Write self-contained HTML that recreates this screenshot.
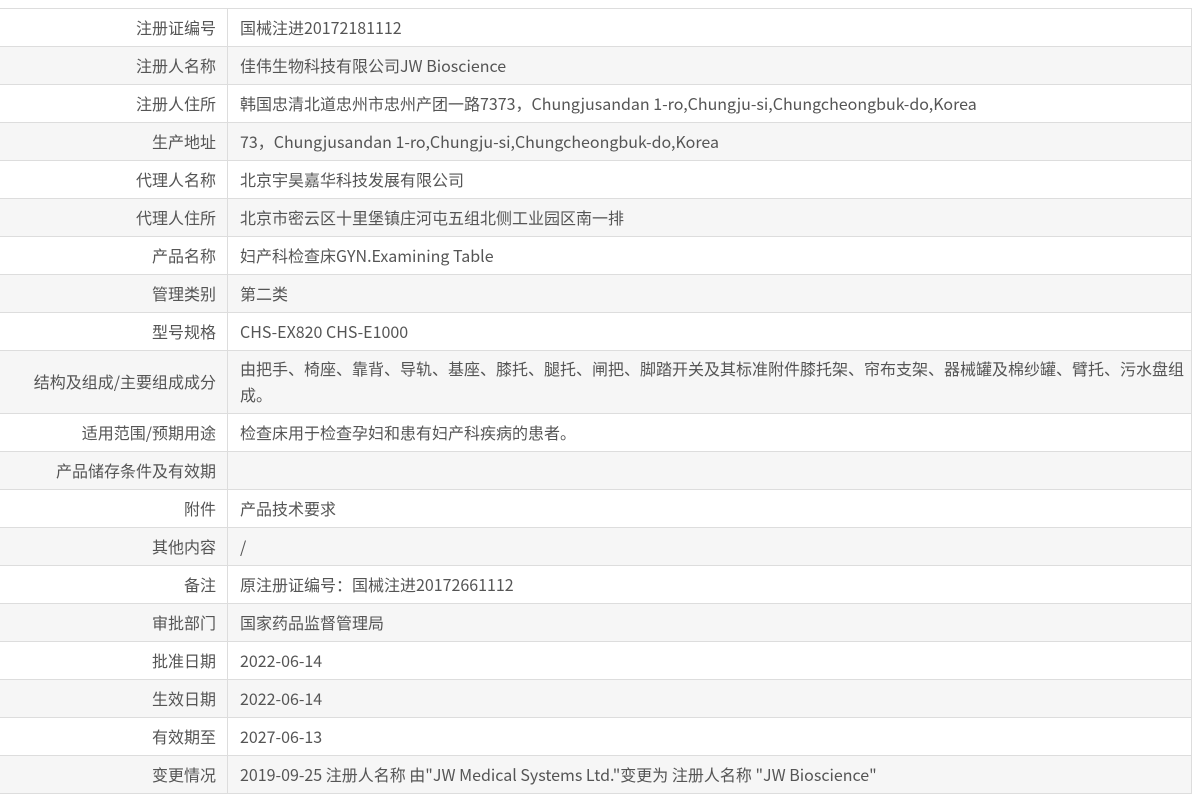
<!DOCTYPE html>
<html><head><meta charset="utf-8">
<style>
html,body{margin:0;padding:0;background:#fff;width:1200px;height:769px;overflow:hidden}
body{font-family:"Noto Sans CJK SC","Liberation Sans",sans-serif;font-size:16px;color:#555}
table{position:absolute;left:0;top:8px;width:1192px;border-collapse:collapse;table-layout:fixed}
td{border:1px solid #ddd;height:35px;padding:0 11px 2px;vertical-align:middle;line-height:26px}
td.l{width:205px;text-align:right;padding-right:11px}
td.v{padding-left:12px;padding-right:4px}
tr:nth-child(even) td{background:#f6f6f6}
td:first-child{border-left:none}
</style></head><body>
<table>
<tr><td class="l">注册证编号</td><td class="v">国械注进20172181112</td></tr>
<tr><td class="l">注册人名称</td><td class="v">佳伟生物科技有限公司JW Bioscience</td></tr>
<tr><td class="l">注册人住所</td><td class="v">韩国忠清北道忠州市忠州产团一路7373，Chungjusandan 1-ro,Chungju-si,Chungcheongbuk-do,Korea</td></tr>
<tr><td class="l">生产地址</td><td class="v">73，Chungjusandan 1-ro,Chungju-si,Chungcheongbuk-do,Korea</td></tr>
<tr><td class="l">代理人名称</td><td class="v">北京宇昊嘉华科技发展有限公司</td></tr>
<tr><td class="l">代理人住所</td><td class="v">北京市密云区十里堡镇庄河屯五组北侧工业园区南一排</td></tr>
<tr><td class="l">产品名称</td><td class="v">妇产科检查床GYN.Examining Table</td></tr>
<tr><td class="l">管理类别</td><td class="v">第二类</td></tr>
<tr><td class="l">型号规格</td><td class="v">CHS-EX820 CHS-E1000</td></tr>
<tr><td class="l" style="height:60px">结构及组成/主要组成成分</td><td class="v">由把手、椅座、靠背、导轨、基座、膝托、腿托、闸把、脚踏开关及其标准附件膝托架、帘布支架、器械罐及棉纱罐、臂托、污水盘组<br>成。</td></tr>
<tr><td class="l">适用范围/预期用途</td><td class="v">检查床用于检查孕妇和患有妇产科疾病的患者。</td></tr>
<tr><td class="l">产品储存条件及有效期</td><td class="v"></td></tr>
<tr><td class="l">附件</td><td class="v">产品技术要求</td></tr>
<tr><td class="l">其他内容</td><td class="v">/</td></tr>
<tr><td class="l">备注</td><td class="v">原注册证编号：国械注进20172661112</td></tr>
<tr><td class="l">审批部门</td><td class="v">国家药品监督管理局</td></tr>
<tr><td class="l">批准日期</td><td class="v">2022-06-14</td></tr>
<tr><td class="l">生效日期</td><td class="v">2022-06-14</td></tr>
<tr><td class="l">有效期至</td><td class="v">2027-06-13</td></tr>
<tr><td class="l">变更情况</td><td class="v">2019-09-25 注册人名称 由"JW Medical Systems Ltd."变更为 注册人名称 "JW Bioscience"</td></tr>
</table>
</body></html>
